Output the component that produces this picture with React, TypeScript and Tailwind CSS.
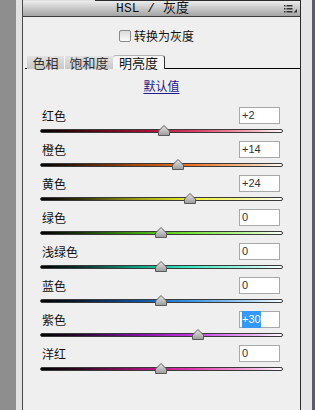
import React from "react";

// One slider row of the HSL panel
interface Channel {
  label: string;
  value: number;
  gradient: string;
  selected?: boolean;
}

const channels: Channel[] = [
  { label: "红色", value: 2, gradient: "linear-gradient(to right,#000 0%,#4a0614 18%,#a8103a 45%,#e0406a 65%,#f2b0c0 88%,#fff 100%)" },
  { label: "橙色", value: 14, gradient: "linear-gradient(to right,#000 0%,#4a2008 18%,#a84a10 40%,#f07020 62%,#f8c8a0 88%,#fff 100%)" },
  { label: "黄色", value: 24, gradient: "linear-gradient(to right,#000 0%,#3a3a08 18%,#a0a010 40%,#f0f030 62%,#f8f8b0 88%,#fff 100%)" },
  { label: "绿色", value: 0, gradient: "linear-gradient(to right,#000 0%,#1a3a08 18%,#40a010 40%,#70e030 60%,#c8f8a8 88%,#fff 100%)" },
  { label: "浅绿色", value: 0, gradient: "linear-gradient(to right,#000 0%,#083a30 18%,#10a080 40%,#30e8c0 60%,#b0f8e8 88%,#fff 100%)" },
  { label: "蓝色", value: 0, gradient: "linear-gradient(to right,#000 0%,#08203a 18%,#1050a0 40%,#3090e0 60%,#b0d8f8 88%,#fff 100%)" },
  { label: "紫色", value: 30, gradient: "linear-gradient(to right,#000 0%,#300838 18%,#8010a0 40%,#c030e0 60%,#e8b0f8 88%,#fff 100%)", selected: true },
  { label: "洋红", value: 0, gradient: "linear-gradient(to right,#000 0%,#3a0828 18%,#a01070 40%,#e030a8 60%,#f8b0e0 88%,#fff 100%)" },
];

const cjk = { fontFamily: '"SimSun","Noto Sans CJK SC",sans-serif' };

const Thumb: React.FC = () => (
  <svg width="12" height="11" viewBox="0 0 12 11">
    <defs>
      <linearGradient id="tg" x1="0" y1="0" x2="0" y2="1">
        <stop offset="0" stopColor="#e6e6e6" />
        <stop offset="1" stopColor="#9a9a9a" />
      </linearGradient>
    </defs>
    <path d="M6 0.5 L11.5 6 L11.5 10.5 L0.5 10.5 L0.5 6 Z" fill="url(#tg)" stroke="#5a5a5a" strokeWidth="1" />
  </svg>
);

const SliderRow: React.FC<{ ch: Channel }> = ({ ch }) => {
  const pos = 121.5 + (ch.value / 100) * 121;
  const text = ch.value > 0 ? `+${ch.value}` : `${ch.value}`;
  return (
    <div className="h-[34px]">
      <div className="flex h-[17px] items-center justify-between pl-[19px] pr-[20px]">
        <span className="text-[12px] text-[#111]" style={cjk}>
          {ch.label}
        </span>
        <div className="flex h-[17px] w-[41px] items-center border border-[#a8a8a8] bg-white pl-[2px] text-[11px] text-[#333]" style={{ fontFamily: '"Liberation Sans",sans-serif' }}>
          <span className={ch.selected ? "bg-[#3399ff] text-white" : ""}>{text}</span>
        </div>
      </div>
      <div className="relative ml-[17px] mt-[5px] h-[4px] w-[243px]">
        <div className="h-[4px] w-full rounded-[2px] border border-[#3a3a3a]" style={{ background: ch.gradient }} />
        <div className="absolute top-[-4px]" style={{ left: pos - 6 }}>
          <Thumb />
        </div>
      </div>
    </div>
  );
};

const App: React.FC = () => {
  return (
    <div className="flex h-[410px] w-[315px] overflow-hidden bg-[#8e8e8e]">
      <div className="w-[16px] bg-[#8e8e8e]" />
      <div className="w-[6px] bg-[#e2e2e2]" />
      <div className="w-[1px] bg-[#4a4a4a]" />

      {/* panel */}
      <div className="flex w-[278px] flex-col bg-[#efefef]">
        <div className="flex h-[1px]">
          <div className="w-[72px] bg-[#e0e0e0]" />
          <div className="flex-1 bg-[#2a2a2a]" />
        </div>
        <div className="relative flex h-[16px] items-center justify-center border-b border-[#3c3c3c] bg-gradient-to-b from-[#ececec] to-[#a4a4a4] pr-[18px]">
          <span className="text-[13px] leading-none text-[#111]" style={{ fontFamily: '"Liberation Mono","SimSun","Noto Sans CJK SC",monospace' }}>
            HSL / 灰度
          </span>
          <svg className="absolute right-[2px] top-[4px]" width="14" height="8" viewBox="0 0 14 8">
            <rect x="0" y="0" width="1.5" height="1.5" fill="#333" />
            <rect x="0" y="3" width="1.5" height="1.5" fill="#333" />
            <rect x="0" y="6" width="1.5" height="1.5" fill="#333" />
            <rect x="2.5" y="0" width="6" height="1.5" fill="#333" />
            <rect x="2.5" y="3" width="6" height="1.5" fill="#333" />
            <rect x="2.5" y="6" width="6" height="1.5" fill="#333" />
            <path d="M13 4 L13 7.5 L9.5 7.5 Z" fill="#333" />
          </svg>
        </div>

        {/* grayscale checkbox */}
        <div className="mt-[13px] flex h-[12px] items-center justify-center pr-[10px]">
          <div className="h-[12px] w-[12px] rounded-[2px] border border-[#8a8a8a] bg-gradient-to-b from-[#dadada] to-[#fafafa]" />
          <span className="ml-[3px] text-[12px] text-[#111]" style={cjk}>
            转换为灰度
          </span>
        </div>

        {/* tabs */}
        <div className="mt-[14px] flex h-[13px] items-end">
          <div className="ml-[2px] h-[1px] w-[2px] bg-black" />
          <div className="flex h-[13px] w-[38px] items-center justify-center border-r border-[#f8f8f8] bg-gradient-to-b from-[#e2e2e2] to-[#c8c8c8] text-[13px] text-[#333]" style={cjk}>
            色相
          </div>
          <div className="flex h-[13px] w-[48px] items-center justify-center bg-gradient-to-b from-[#e2e2e2] to-[#c8c8c8] text-[13px] text-[#333]" style={cjk}>
            饱和度
          </div>
          <div className="flex h-[14px] w-[52px] items-center justify-center rounded-t-[3px] border-r border-t border-[#b0b0b0] border-r-[#333] bg-[#f6f6f6] text-[13px] text-[#111]" style={cjk}>
            明亮度
          </div>
          <div className="h-[1px] flex-1 bg-black" />
        </div>

        {/* default link */}
        <div className="mt-[9px] flex h-[16px] items-center justify-center">
          <span className="text-[12px] text-[#1c1c8c] underline underline-offset-2" style={cjk}>
            默认值
          </span>
        </div>

        <div className="mt-[13px]">
          {channels.map((ch) => (
            <SliderRow key={ch.label} ch={ch} />
          ))}
        </div>
      </div>

      <div className="w-[1px] bg-[#2a2a2a]" />
      <div className="w-[11px] bg-[#e6e6e6]" />
      <div className="w-[3px] bg-[#5a5c68]" />
    </div>
  );
};

export default App;
